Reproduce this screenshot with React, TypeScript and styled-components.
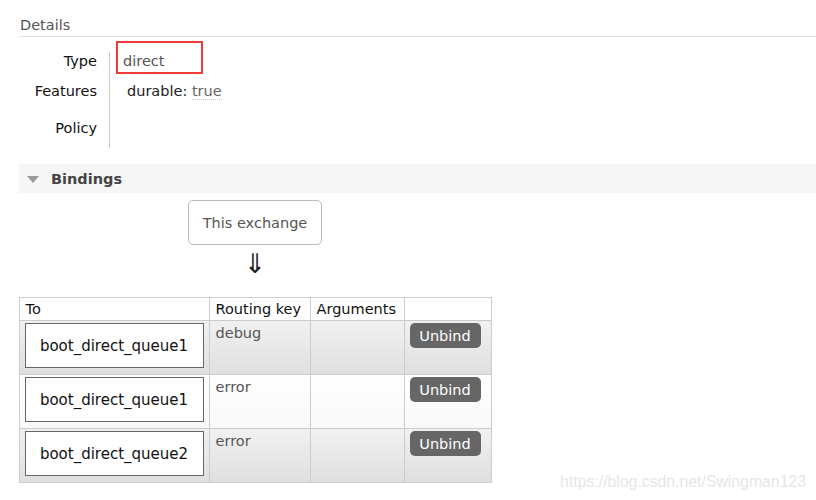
import React from 'react';
import styled, { createGlobalStyle } from 'styled-components';

type Binding = {
  queue: string;
  routingKey: string;
};

const bindings: Binding[] = [
  { queue: 'boot_direct_queue1', routingKey: 'debug' },
  { queue: 'boot_direct_queue1', routingKey: 'error' },
  { queue: 'boot_direct_queue2', routingKey: 'error' },
];

const App: React.FC = () => {
  return (
    <Page>
      <GlobalStyle />
      <SectionTitle>Details</SectionTitle>
      <DetailsGrid>
        <Labels>
          <Label h={30}>Type</Label>
          <Label h={37}>Features</Label>
          <Label h={29}>Policy</Label>
        </Labels>
        <Values>
          <Value h={30}>
            <Marked>direct</Marked>
          </Value>
          <Value h={37}>
            <Feature>
              durable: <Dotted>true</Dotted>
            </Feature>
          </Value>
          <Value h={29} />
        </Values>
      </DetailsGrid>

      <Band>
        <Triangle />
        <BandTitle>Bindings</BandTitle>
      </Band>

      <BindingsArea>
        <Source>This exchange</Source>
        <Arrow>⇓</Arrow>
        <Table>
          <thead>
            <tr>
              <Th w={177}>To</Th>
              <Th w={88}>Routing key</Th>
              <Th w={81}>Arguments</Th>
              <Th w={74}></Th>
            </tr>
          </thead>
          <tbody>
            {bindings.map((b, index) => {
              return (
                <Row key={index} alt={index % 2 === 1}>
                  <Td>
                    <QueueBox>{b.queue}</QueueBox>
                  </Td>
                  <KeyTd>{b.routingKey}</KeyTd>
                  <Td></Td>
                  <Td>
                    <Unbind>Unbind</Unbind>
                  </Td>
                </Row>
              );
            })}
          </tbody>
        </Table>
      </BindingsArea>

      <Watermark>https://blog.csdn.net/Swingman123</Watermark>
    </Page>
  );
};

const GlobalStyle = createGlobalStyle`
  body {
    margin: 0;
    background: #fff;
    font-family: "DejaVu Sans", Verdana, sans-serif;
    font-size: 14.5px;
    color: #222;
  }
`;

const Page = styled.div`
  position: relative;
  width: 816px;
  height: 500px;
  padding-left: 19px;
  box-sizing: border-box;
  overflow: hidden;
`;

const SectionTitle = styled.div`
  margin-top: 16px;
  padding-left: 1px;
  height: 20px;
  line-height: 18px;
  color: #555;
  border-bottom: 1px solid #e2e2e2;
`;

const DetailsGrid = styled.div`
  display: flex;
  margin-top: 15px;
`;

const Labels = styled.div`
  width: 78px;
  display: flex;
  flex-direction: column;
  align-items: flex-end;
  padding-right: 12px;
`;

const Label = styled.div<{ h: number }>`
  height: ${(p) => p.h}px;
  line-height: 18px;
  color: #111;
`;

const Values = styled.div`
  border-left: 1px solid #ccc;
  padding-left: 6px;
  display: flex;
  flex-direction: column;
`;

const Value = styled.div<{ h: number }>`
  height: ${(p) => p.h}px;
  line-height: 18px;
  position: relative;
`;

const Marked = styled.span`
  position: absolute;
  left: 0;
  top: -11px;
  width: 87px;
  height: 33px;
  border: 2px solid #f03a3a;
  padding: 9px 0 0 5px;
  box-sizing: border-box;
  color: #555;
  line-height: 18px;
`;

const Feature = styled.span`
  padding-left: 11px;
  color: #222;
`;

const Dotted = styled.span`
  color: #666;
  border-bottom: 1px dotted #ccc;
`;

const Band = styled.div`
  margin-top: 16px;
  height: 29px;
  background: #f6f6f6;
  display: flex;
  align-items: center;
  padding-left: 8px;
`;

const Triangle = styled.span`
  width: 0;
  height: 0;
  border-left: 6px solid transparent;
  border-right: 6px solid transparent;
  border-top: 7px solid #999;
  margin-right: 12px;
  margin-top: 2px;
`;

const BandTitle = styled.span`
  font-weight: bold;
  color: #444;
  line-height: 18px;
`;

const BindingsArea = styled.div`
  width: 472px;
  display: flex;
  flex-direction: column;
  align-items: center;
`;

const Source = styled.div`
  margin-top: 7px;
  width: 134px;
  height: 45px;
  box-sizing: border-box;
  border: 1px solid #bbb;
  border-radius: 5px;
  display: flex;
  align-items: center;
  justify-content: center;
  color: #555;
`;

const Arrow = styled.div`
  font-size: 27px;
  line-height: 24px;
  height: 24px;
  margin-top: 7px;
  color: #222;
`;

const Table = styled.table`
  margin-top: 21px;
  width: 472px;
  border-collapse: collapse;
  table-layout: fixed;
  border: 1px solid #ccc;
`;

const Th = styled.th<{ w: number }>`
  width: ${(p) => p.w}px;
  height: 22px;
  padding: 0 6px;
  text-align: left;
  font-weight: normal;
  color: #111;
  border: 1px solid #ccc;
  line-height: 18px;
  white-space: nowrap;
`;

const Row = styled.tr<{ alt: boolean }>`
  height: 54px;
  background: ${(p) =>
    p.alt
      ? 'linear-gradient(#ffffff, #f8f8f8)'
      : 'linear-gradient(#f1f1f1, #dfdfdf)'};
`;

const Td = styled.td`
  border: 1px solid #ccc;
  padding: 2px 5px 5px 5px;
  vertical-align: top;
`;

const KeyTd = styled(Td)`
  color: #555;
  padding: 3px 6px;
  line-height: 18px;
`;

const QueueBox = styled.div`
  height: 45px;
  box-sizing: border-box;
  border: 1px solid #666;
  background: #fff;
  display: flex;
  align-items: center;
  justify-content: center;
  color: #111;
  font-size: 15px;
`;

const Unbind = styled.button`
  width: 71px;
  height: 25px;
  border: none;
  border-radius: 5px;
  background: #666;
  color: #fff;
  font-family: "DejaVu Sans", Verdana, sans-serif;
  font-size: 14.5px;
  padding: 0;
  cursor: pointer;
`;

const Watermark = styled.div`
  position: absolute;
  right: 10px;
  bottom: 9px;
  font-family: "Liberation Sans", Arial, sans-serif;
  font-size: 15.8px;
  color: #e6e6e6;
`;

export default App;
